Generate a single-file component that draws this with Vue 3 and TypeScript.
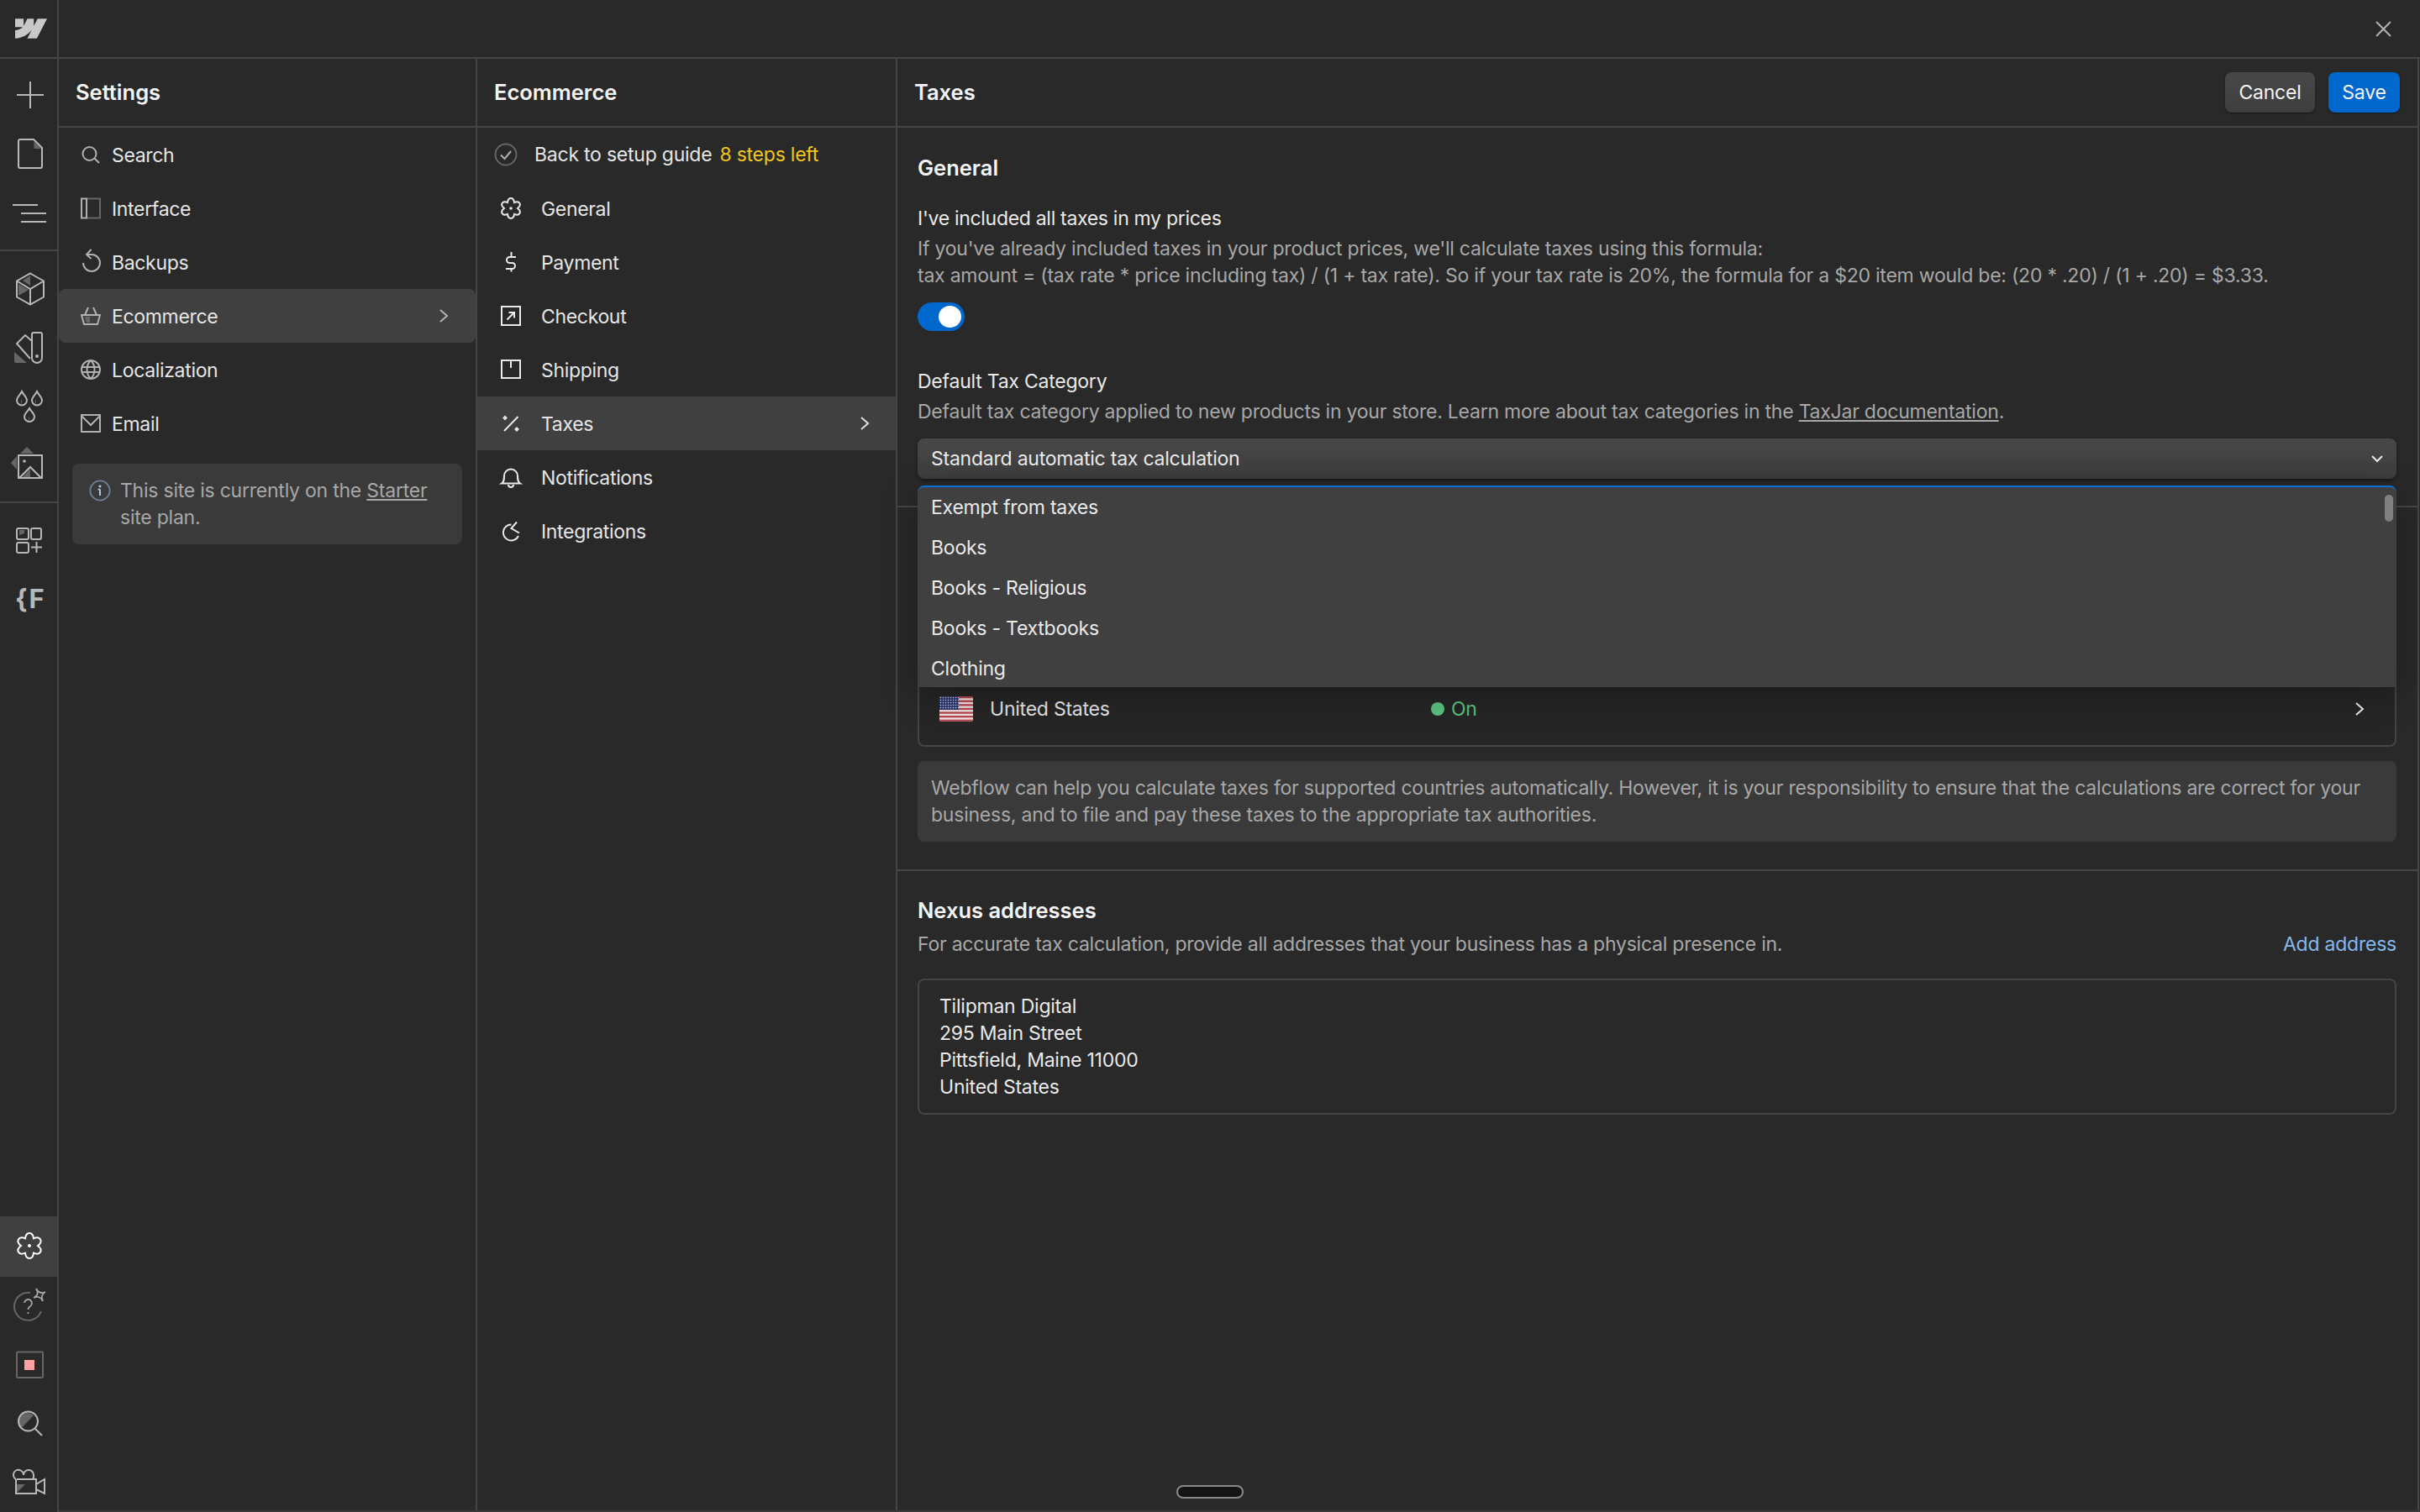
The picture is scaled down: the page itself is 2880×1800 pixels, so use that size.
<script setup lang="ts">
type Ico = { s: string; f?: string; d?: string }

function gear(c: number, ro: number, ri: number): string {
  const pt = (r: number, deg: number) => {
    const a = (deg * Math.PI) / 180
    return `${(c + r * Math.cos(a)).toFixed(2)} ${(c + r * Math.sin(a)).toFixed(2)}`
  }
  let p = `M${pt(ri, -120)}`
  for (let i = 0; i < 6; i++) {
    const a = -90 + 60 * i
    p += `C${pt(ro * 1.22, a - 13)} ${pt(ro * 1.22, a + 13)} ${pt(ri, a + 30)}`
  }
  return p + 'Z'
}

const settingsNav: { label: string; icon: Ico; active?: boolean }[] = [
  { label: 'Search', icon: { s: 'M10.5 3a8 8 0 1 1 0 16a8 8 0 0 1 0-16ZM16.5 16.5L22 22' } },
  { label: 'Interface', icon: { s: 'M1 0.500h6v23H1Z', d: 'M7 0.500h16v23H7' } },
  { label: 'Backups', icon: { s: 'M7 3H13A10 10 0 1 1 3 13M12.500 -3L7 3L12.500 8' } },
  {
    label: 'Ecommerce',
    active: true,
    icon: { s: 'M1 11h22l-3 11H4ZM5 11l4-9M19 11l-4-9', f: 'M5 13h6v7H7Z' },
  },
  { label: 'Localization', icon: { s: 'M12 1a11 11 0 1 1 0 22a11 11 0 0 1 0-22ZM1 9h22M1 15h22M12 1c-6 6-6 16 0 22M12 1c6 6 6 16 0 22' } },
  { label: 'Email', icon: { s: 'M1 2h22v20H1ZM1 3l11 11L23 3' } },
]

const ecomNav: { label: string; icon: Ico; dot?: boolean; active?: boolean }[] = [
  { label: 'General', icon: { s: gear(12, 11.5, 8) }, dot: true },
  { label: 'Payment', icon: { s: 'M18 6h-7.500a3.500 3.500 0 0 0 0 7h3a3.500 3.500 0 0 1 0 7H6M12.500 0v6M12.500 20v3.500' } },
  { label: 'Checkout', icon: { s: 'M1 1h22v22H1ZM7.500 16.500L16 8M9.500 8H16v6.500' } },
  { label: 'Shipping', icon: { s: 'M1 1h22v21H1ZM12 1v9' } },
  { label: 'Taxes', active: true, icon: { s: 'M4 21L20.500 4M5 4l1.500 1.500L5 7L3.500 5.500ZM19 17.500l1.500 1.500L19 20.500L17.500 19Z' } },
  { label: 'Notifications', icon: { s: 'M1 19.500h22c-3-2-3-5-3-9a8 8 0 0 0-16 0c0 4 0 7-3 9ZM9 21a3 3 0 0 0 6 0' } },
  { label: 'Integrations', icon: { s: 'M19 1.500L12.500 9L22 14.500M12.500 4.500A9.500 9.500 0 1 0 21 18' } },
]

const options = ['Exempt from taxes', 'Books', 'Books - Religious', 'Books - Textbooks', 'Clothing']

const flagStripes = [0, 1, 2, 3, 4, 5, 6].map((i) => i * 4.6)
const railGear = gear(19, 14.5, 10)
</script>

<template>
  <div class="app">
    <aside class="rail">
      <div class="rail-logo">
        <svg class="logo" viewBox="0 0 1080 675" aria-hidden="true">
          <path d="M1080 0L735.386 673.684H411.696L555.916 394.481H549.445C430.464 548.934 252.942 650.61 0 673.684V398.344C0 398.344 161.813 388.787 256.937 288.776H0V0.006H288.771V237.515L295.252 237.489L413.254 0.006H631.645V236.009L638.126 236.001L760.556 0H1080Z" />
        </svg>
      </div>

      <div class="rail-group first">
        <div class="rail-btn">
          <svg viewBox="0 0 40 40"><path d="M20 4V36M4 20H36" /></svg>
        </div>
        <div class="rail-btn">
          <svg viewBox="0 0 40 40">
            <path class="dim" d="M24.500 5.500L33 14H24.500Z" />
            <path d="M8 3H24L34 13V35a2 2 0 0 1-2 2H8a2 2 0 0 1-2-2V5a2 2 0 0 1 2-2Z" />
          </svg>
        </div>
        <div class="rail-btn">
          <svg viewBox="0 0 40 40"><path d="M-1 11H29M9 21H39M9 31H39" /></svg>
        </div>
      </div>

      <div class="rail-group second">
        <div class="rail-btn">
          <svg viewBox="0 0 40 40">
            <path class="dim" d="M20 4V16L11 10ZM6 14L18 21L6 28Z" />
            <path d="M20 1.500L36 10.500V29.500L20 38.500L4 29.500V10.500ZM4 10.500L20 20L36 10.500M20 20V38.500" />
          </svg>
        </div>
        <div class="rail-btn">
          <svg viewBox="0 0 40 40">
            <path class="dim" d="M1 25L16 38H3a2 2 0 0 1-2-2Z" />
            <path d="M24 2H32a2 2 0 0 1 2 2V32a6 6 0 0 1-12 0V4a2 2 0 0 1 2-2ZM22 12L14 5L4 15L20 33" />
            <circle class="solid" cx="28" cy="30" r="2" />
          </svg>
        </div>
        <div class="rail-btn">
          <svg viewBox="0 0 40 40">
            <path class="dim" d="M10 8V17a5 5 0 0 1 0-6ZM27 8V17a5 5 0 0 1 0-6ZM19 28V37a5 5 0 0 1 0-6Z" />
            <path d="M10 2C12 6 16 9 16 12.500A6 6 0 0 1 4 12.500C4 9 8 6 10 2ZM28 2C30 6 34 9 34 12.500A6 6 0 0 1 22 12.500C22 9 26 6 28 2ZM19 22C21 26 25 28 25 32A6 6 0 0 1 13 32C13 28 17 26 19 22Z" />
          </svg>
        </div>
        <div class="rail-btn">
          <svg viewBox="0 0 40 40">
            <path class="dim" d="M16 -2L24 6H8ZM-3 17L4 9V25ZM20 24V35H10Z" />
            <path d="M6 8H34V35H6ZM7 35L20 22L33 35" />
            <circle class="solid" cx="13" cy="15" r="1.800" />
          </svg>
        </div>
      </div>

      <div class="rail-group third">
        <div class="rail-btn">
          <svg viewBox="0 0 40 40">
            <path class="dim" d="M7 8H13V12L7 14Z" />
            <path d="M6 6H16a2 2 0 0 1 2 2V17a2 2 0 0 1-2 2H6a2 2 0 0 1-2-2V8a2 2 0 0 1 2-2ZM23 6H31a2 2 0 0 1 2 2V17a2 2 0 0 1-2 2H23a2 2 0 0 1-2-2V8a2 2 0 0 1 2-2ZM6 23H16a2 2 0 0 1 2 2V33a2 2 0 0 1-2 2H6a2 2 0 0 1-2-2V25a2 2 0 0 1 2-2ZM27.500 22V35M21 28.500H34" />
          </svg>
        </div>
        <div class="rail-btn">
          <span class="rail-code">{F</span>
        </div>
      </div>

      <div class="rail-spacer"></div>

      <div class="rail-btn rail-settings">
        <svg viewBox="0 0 40 40">
          <path :d="railGear" />
          <circle class="solid" cx="19" cy="19" r="2" />
        </svg>
      </div>
      <div class="rail-btn">
        <svg viewBox="0 0 40 40">
          <path class="faint" d="M33 26A16.500 16.500 0 1 1 20 4" />
          <path class="thin" d="M13 16a4.500 4.500 0 1 1 6.500 4.500c-1.500 1-2 2-2 3.500M17.500 27v2" />
          <path class="thin" d="M27 -1Q31.500 6.500 38 3Q31.500 6.500 35 14Q31.500 6.500 24 10Q31.500 6.500 27 -1Z" />
        </svg>
      </div>
      <div class="rail-btn">
        <svg viewBox="0 0 40 40">
          <path class="faint" d="M5 4.500H34a1 1 0 0 1 1 1V34a1 1 0 0 1-1 1H5a1 1 0 0 1-1-1V5.500a1 1 0 0 1 1-1Z" />
          <rect class="pink" x="13" y="14" width="12" height="12" />
        </svg>
      </div>
      <div class="rail-btn">
        <svg viewBox="0 0 40 40">
          <path class="dim" d="M9.500 25A10 10 0 0 1 24 10Z" />
          <path d="M17.500 5.500a11.500 11.500 0 1 1 0 23a11.500 11.500 0 0 1 0-23ZM26 26L34 34" />
        </svg>
      </div>
      <div class="rail-btn">
        <svg viewBox="0 0 40 40">
          <path class="dim" d="M4 22H14L4 32Z" />
          <path d="M4 16H27V33H3V16M3 16a6 6 0 1 1 9-5a6 6 0 1 1 12 0a6 6 0 0 1-1 5M27 22L37 16V33L27 28" />
        </svg>
      </div>
    </aside>

    <div class="main">
      <header class="topbar">
        <svg class="close" viewBox="0 0 20 20"><path d="M2 2L18 18M18 2L2 18" /></svg>
      </header>

      <div class="columns">
        <section class="col col-settings">
          <div class="col-head"><h2>Settings</h2></div>
          <nav class="nav">
            <div v-for="item in settingsNav" :key="item.label" class="nav-row settings-row" :class="{ active: item.active }">
              <svg class="nav-icon muted" viewBox="0 0 24 24">
                <path v-if="item.icon.f" class="dim" :d="item.icon.f" />
                <path v-if="item.icon.d" class="faint" :d="item.icon.d" />
                <path :d="item.icon.s" />
              </svg>
              <span class="nav-label">{{ item.label }}</span>
              <svg v-if="item.active" class="chev" viewBox="0 0 14 20"><path d="M3 3L11 10L3 17" /></svg>
            </div>
          </nav>
          <div class="plan-note">
            <svg class="info" viewBox="0 0 28 28">
              <circle cx="14" cy="14" r="12.500" />
              <path d="M14 12.500V20.500M11.500 12.500H14" />
              <circle class="info-dot" cx="14" cy="8.500" r="1.600" />
            </svg>
            <p>This site is currently on the <u>Starter</u> site plan.</p>
          </div>
        </section>

        <section class="col col-ecom">
          <div class="col-head"><h2>Ecommerce</h2></div>
          <nav class="nav">
            <div class="nav-row guide-row">
              <svg class="guide-check" viewBox="0 0 28 28">
                <circle cx="14" cy="14" r="12.500" />
                <path class="tick" d="M8 14.500L12.500 19L20 10" />
              </svg>
              <span class="guide-label">Back to setup guide</span>
              <span class="steps">8 steps left</span>
            </div>
            <div v-for="item in ecomNav" :key="item.label" class="nav-row ecom-row" :class="{ active: item.active, flat: item.active }">
              <svg class="nav-icon bright" viewBox="0 0 24 24">
                <path :d="item.icon.s" />
                <circle v-if="item.dot" class="solid" cx="12" cy="12" r="1.800" />
              </svg>
              <span class="nav-label">{{ item.label }}</span>
              <svg v-if="item.active" class="chev small" viewBox="0 0 14 20"><path d="M3 3L11 10L3 17" /></svg>
            </div>
          </nav>
        </section>

        <section class="col col-taxes">
          <div class="col-head taxes-head">
            <h2>Taxes</h2>
            <div class="actions">
              <button class="btn btn-cancel">Cancel</button>
              <button class="btn btn-save">Save</button>
            </div>
          </div>

          <div class="block general">
            <h3>General</h3>
            <div class="label l-first">I've included all taxes in my prices</div>
            <p class="desc">
              If you've already included taxes in your product prices, we'll calculate taxes using this formula:<br />
              tax amount = (tax rate * price including tax) / (1 + tax rate). So if your tax rate is 20%, the formula for a $20 item would be: (20 * .20) / (1 + .20) = $3.33.
            </p>
            <div class="toggle"><span class="knob"></span></div>
            <div class="label l-second">Default Tax Category</div>
            <p class="desc">
              Default tax category applied to new products in your store. Learn more about tax categories in the <u>TaxJar documentation</u>.
            </p>
            <div class="select-wrap">
              <div class="select">
                <span>Standard automatic tax calculation</span>
                <svg class="select-chev" viewBox="0 0 16 12"><path d="M2 3L8 9L14 3" /></svg>
              </div>
              <div class="dropdown">
                <div v-for="o in options" :key="o" class="option">{{ o }}</div>
                <div class="scroll-thumb"></div>
                <div class="corner"></div>
              </div>
            </div>
          </div>

          <div class="block regions">
            <div class="region-table">
              <div class="region-row">
                <svg class="flag" viewBox="0 0 40 30">
                  <defs>
                    <pattern id="stars" width="3" height="3" patternUnits="userSpaceOnUse">
                      <circle cx="1.500" cy="1.500" r="0.750" fill="#d8dcf0" />
                    </pattern>
                    <clipPath id="flag-clip"><rect width="40" height="30" rx="3" /></clipPath>
                  </defs>
                  <g clip-path="url(#flag-clip)">
                    <rect width="40" height="30" fill="#f4e6e6" />
                    <rect v-for="y in flagStripes" :key="y" x="0" :y="y" width="40" height="2.300" fill="#b8474f" />
                    <rect width="23" height="16" fill="#2f3a72" />
                    <rect width="23" height="16" fill="url(#stars)" />
                  </g>
                </svg>
                <span class="country">United States</span>
                <span class="status"><i class="status-dot"></i>On</span>
                <svg class="row-chev" viewBox="0 0 14 20"><path d="M3 3L11 10L3 17" /></svg>
              </div>
            </div>
            <div class="notice">
              Webflow can help you calculate taxes for supported countries automatically. However, it is your responsibility to ensure that the calculations are correct for your business, and to file and pay these taxes to the appropriate tax authorities.
            </div>
          </div>

          <div class="block nexus">
            <h3>Nexus addresses</h3>
            <div class="nexus-sub">
              <p class="desc">For accurate tax calculation, provide all addresses that your business has a physical presence in.</p>
              <a class="add-link">Add address</a>
            </div>
            <div class="address">
              <div>Tilipman Digital</div>
              <div>295 Main Street</div>
              <div>Pittsfield, Maine 11000</div>
              <div>United States</div>
            </div>
          </div>
        </section>
      </div>
    </div>
    <div class="home-pill"></div>
  </div>
</template>

<style>
html,
body {
  margin: 0;
  background: #292929;
}
</style>

<style scoped>
.app {
  display: flex;
  width: 2880px;
  height: 1800px;
  overflow: hidden;
  background: #292929;
  color: #e6e6e6;
  font-family: Inter, "Liberation Sans", sans-serif;
  font-size: 23px;
  letter-spacing: -0.23px;
  line-height: 32px;
  position: relative;
}
svg {
  display: block;
  fill: none;
  overflow: visible;
}
path {
  stroke: currentColor;
  stroke-width: 2;
}
.dim {
  fill: #666;
  stroke: none;
}
.solid {
  fill: currentColor;
  stroke: none;
}
.faint {
  stroke: #666;
}
.thin {
  stroke: #a6a6a6;
  stroke-width: 1.800;
}
.pink {
  fill: #ff9fa3;
}

/* rail */
.rail {
  width: 70px;
  flex: none;
  box-sizing: border-box;
  border-right: 2px solid #454545;
  display: flex;
  flex-direction: column;
  color: #b8b8b8;
}
.rail-logo {
  height: 70px;
  box-sizing: border-box;
  border-bottom: 2px solid #454545;
  display: flex;
  align-items: flex-start;
  padding: 22px 0 0 18px;
}
.logo {
  width: 38px;
  height: 24px;
}
.logo path {
  fill: #c8c8c8;
  stroke: none;
}
.rail-group {
  border-bottom: 2px solid #454545;
}
.rail-group.first {
  padding: 8px 0 9px;
}
.rail-group.second {
  padding: 10px 0 8px;
}
.rail-group.third {
  padding-top: 9px;
  border-bottom: 0;
}
.rail-spacer {
  flex: 1;
}
.rail-btn {
  height: 70px;
  display: flex;
  align-items: center;
  padding-left: 16px;
}
.rail-btn svg {
  width: 40px;
  height: 40px;
}
.rail-settings {
  height: 72px;
  background: #404040;
  color: #fff;
}
.rail-code {
  font-size: 31px;
  font-weight: 700;
  letter-spacing: 1.500px;
  color: #b8b8b8;
  padding-left: 2px;
}

/* main */
.main {
  flex: 1;
  min-width: 0;
  display: flex;
  flex-direction: column;
  box-sizing: border-box;
  border-bottom: 2px solid #3a3a3a;
}
.topbar {
  height: 70px;
  flex: none;
  box-sizing: border-box;
  border-bottom: 2px solid #454545;
  display: flex;
  align-items: center;
  justify-content: flex-end;
  padding-right: 33px;
}
.close {
  width: 21px;
  height: 21px;
  color: #b0b0b0;
}
.columns {
  flex: 1;
  min-height: 0;
  display: flex;
}
.col {
  box-sizing: border-box;
  border-right: 2px solid #454545;
  min-width: 0;
}
.col-settings {
  width: 498px;
  flex: none;
}
.col-ecom {
  width: 500px;
  flex: none;
}
.col-taxes {
  flex: 1;
  margin-right: 1px;
}
.col-head {
  height: 82px;
  box-sizing: border-box;
  border-bottom: 2px solid #454545;
  display: flex;
  align-items: center;
  padding-left: 20px;
}
h2,
h3 {
  margin: 0;
  font-size: 25.500px;
  font-weight: 600;
  letter-spacing: 0;
  color: #f5f5f5;
}
.taxes-head {
  justify-content: space-between;
  padding-right: 21px;
}

/* nav */
.nav-row {
  height: 64px;
  display: flex;
  align-items: center;
}
.nav-row.active {
  background: #404040;
  border-radius: 8px;
}
.nav-row.flat {
  border-radius: 0;
}
.settings-row {
  padding: 0 31px 0 26px;
  gap: 13px;
}
.ecom-row {
  padding: 0 30px 0 28px;
  gap: 24px;
}
.nav-icon {
  width: 24px;
  height: 24px;
  flex: none;
}
.muted {
  color: #b0b0b0;
}
.bright {
  color: #eaeaea;
}
.nav-label {
  flex: 1;
  padding-top: 2px;
  letter-spacing: -0.33px;
}
.guide-row {
  padding-left: 20px;
  gap: 21px;
}
.guide-check {
  width: 28px;
  height: 28px;
  margin-right: -1px;
}
.guide-check circle {
  stroke: #666;
  stroke-width: 2;
}
.guide-check .tick {
  stroke: #b0b0b0;
}
.steps {
  color: #f2c61d;
  margin-left: -12px;
}
.chev {
  width: 14px;
  height: 20px;
  color: #b0b0b0;
}
.chev.small {
  color: #e0e0e0;
}
.plan-note {
  margin: 16px 16px 0;
  padding: 16px 20px;
  background: #3a3a3a;
  border-radius: 8px;
  display: flex;
  gap: 11px;
  color: #a8a8a8;
}
.plan-note p {
  margin: 0;
}
.info {
  width: 26px;
  height: 26px;
  margin-top: 3px;
  flex: none;
}
.info circle {
  stroke: #6b8097;
  stroke-width: 2;
}
.info path {
  stroke: #a9d3f5;
}
.info .info-dot {
  fill: #a9d3f5;
  stroke: none;
}

/* buttons */
.actions {
  display: flex;
  gap: 16px;
}
.btn {
  height: 48px;
  border: 0;
  border-radius: 8px;
  color: #f5f5f5;
  font: inherit;
  letter-spacing: inherit;
  padding: 0;
  box-shadow: 0 1px 2px rgba(0, 0, 0, 0.5);
}
.btn-cancel {
  width: 107px;
  background: linear-gradient(#484848, #3e3e3e);
}
.btn-save {
  width: 85px;
  background: #0067cc;
}

/* blocks */
.block {
  padding: 0 25px 0 24px;
  box-sizing: border-box;
  border-bottom: 2px solid #454545;
}
.general {
  padding-top: 32px;
  padding-bottom: 32px;
  height: 452px;
}
.label {
  color: #eaeaea;
}
.l-first {
  margin-top: 28px;
  letter-spacing: -0.3px;
}
.l-second {
  margin-top: 44px;
}
.desc {
  margin: 4px 0 0;
  color: #a8a8a8;
}
.toggle {
  margin-top: 16px;
  width: 56px;
  height: 34px;
  border-radius: 17px;
  background: #0067cc;
  position: relative;
}
.knob {
  position: absolute;
  left: 25px;
  top: 4px;
  width: 27px;
  height: 26px;
  border-radius: 50%;
  background: #fff;
}
.select-wrap {
  margin-top: 16px;
  position: relative;
}
.select {
  height: 48px;
  box-sizing: border-box;
  padding: 0 15px 0 16px;
  border-radius: 8px;
  background: linear-gradient(#484848, #3c3c3c);
  box-shadow: 0 2px 4px rgba(0, 0, 0, 0.45);
  display: flex;
  align-items: center;
  justify-content: space-between;
  color: #eaeaea;
}
.select-chev {
  width: 16px;
  height: 12px;
  color: #eaeaea;
}
.dropdown {
  position: absolute;
  left: 0;
  right: 0;
  top: 56px;
  height: 240px;
  box-sizing: border-box;
  border-top: 2px solid #0f6fd6;
  border-radius: 8px 8px 0 0;
  background: #404040;
  overflow: hidden;
  z-index: 3;
  box-shadow: 0 12px 40px rgba(0, 0, 0, 0.28);
}
.option {
  height: 48px;
  flex: none;
  padding: 0 16px;
  display: flex;
  align-items: center;
  color: #eaeaea;
}
.scroll-thumb {
  position: absolute;
  right: 4px;
  top: 9px;
  width: 10px;
  height: 32px;
  border-radius: 5px;
  background: #808080;
}
.corner {
  position: absolute;
  right: 0;
  top: -2px;
  width: 19px;
  height: 2px;
  background: #404040;
}
.regions {
  height: 433px;
  padding-top: 136px;
}
.region-table {
  height: 149px;
  box-sizing: border-box;
  border: 2px solid #454545;
  border-radius: 8px;
  padding-top: 70px;
  background: #262626;
}
.region-row {
  height: 64px;
  display: flex;
  align-items: center;
  position: relative;
  padding-left: 24px;
}
.flag {
  width: 40px;
  height: 30px;
  flex: none;
}
.country {
  margin-left: 20px;
  width: 525px;
  flex: none;
}
.status {
  display: flex;
  align-items: center;
  color: #5ac47d;
}
.status-dot {
  width: 16px;
  height: 16px;
  border-radius: 50%;
  background: #5ac47d;
  margin-right: 8px;
}
.row-chev {
  position: absolute;
  right: 35px;
  width: 14px;
  height: 20px;
  color: #f0f0f0;
}
.notice {
  margin-top: 17px;
  height: 96px;
  box-sizing: border-box;
  padding: 16px;
  background: #3a3a3a;
  border-radius: 8px;
  color: #a8a8a8;
}
.nexus {
  padding-top: 31px;
  border-bottom: 0;
}
.nexus-sub {
  display: flex;
  justify-content: space-between;
  align-items: center;
  margin-top: 8px;
}
.nexus-sub .desc {
  margin: 0;
}
.add-link {
  color: #85b9ee;
}
.address {
  margin-top: 25px;
  height: 162px;
  box-sizing: border-box;
  border: 2px solid #454545;
  border-radius: 8px;
  padding: 15px 24px;
  color: #eaeaea;
}
.home-pill {
  position: absolute;
  left: 1400px;
  top: 1768px;
  width: 80px;
  height: 16px;
  box-sizing: border-box;
  border: 2px solid #8a8a8a;
  border-radius: 8px;
  background: #141414;
  z-index: 5;
}
</style>
